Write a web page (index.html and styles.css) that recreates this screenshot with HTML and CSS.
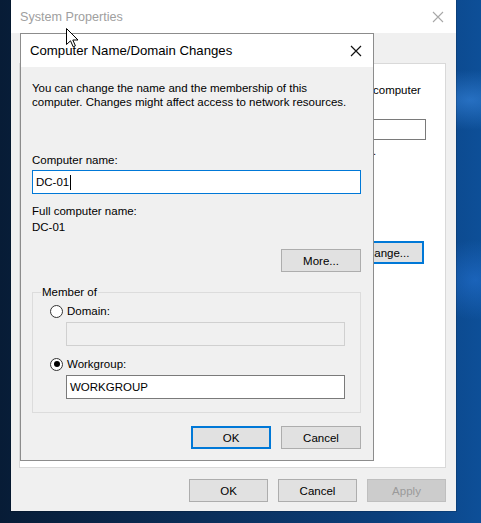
FILE: index.html
```html
<!DOCTYPE html>
<html>
<head>
<meta charset="utf-8">
<link rel="stylesheet" href="styles.css">
</head>
<body>
<div class="desktop">
  <div class="sysprops">
    <div class="titlebar inactive">
      <span class="title">System Properties</span>
      <span class="close"><svg width="12" height="12" viewBox="0 0 12 12"><path d="M1 1L11 11M11 1L1 11" stroke="#a8a8a8" stroke-width="1.1"/></svg></span>
    </div>
    <div class="sp-body">
      <div class="panel">
        <div class="bg-text">computer</div>
        <div class="bg-input"></div>
        <div class="bg-dot">.</div>
        <div class="bg-btn-row"><button class="btn focus bg-change">Change...</button></div>
      </div>
      <div class="sp-buttons">
        <button class="btn">OK</button>
        <button class="btn">Cancel</button>
        <button class="btn disabled">Apply</button>
      </div>
    </div>
  </div>

  <div class="dialog">
    <div class="titlebar">
      <span class="title dlg-title">Computer Name/Domain Changes</span>
      <span class="close"><svg width="12" height="12" viewBox="0 0 12 12"><path d="M1 1L11 11M11 1L1 11" stroke="#111" stroke-width="1.2"/></svg></span>
    </div>
    <div class="dlg-body">
      <p class="intro">You can change the name and the membership of this computer. Changes might affect access to network resources.</p>
      <div class="label lbl-name">Computer name:</div>
      <div class="input active">DC-01<span class="caret"></span></div>
      <div class="label lbl-full">Full computer name:</div>
      <div class="label">DC-01</div>
      <div class="more-row"><button class="btn">More...</button></div>
      <fieldset class="group">
        <legend>Member of</legend>
        <div class="radio-row"><span class="radio"></span><span>Domain:</span></div>
        <div class="input disabled-input sub"></div>
        <div class="radio-row wg"><span class="radio checked"></span><span>Workgroup:</span></div>
        <div class="input sub">WORKGROUP</div>
      </fieldset>
      <div class="dlg-buttons">
        <button class="btn focus">OK</button>
        <button class="btn">Cancel</button>
      </div>
    </div>
  </div>

  <svg class="cursor" width="13" height="20" viewBox="0 0 13 20"><path d="M0.5 0.5 L0.5 16.5 L4.5 12.8 L7.2 18.8 L9.4 17.8 L6.8 12 L12 12 Z" fill="#fff" stroke="#000" stroke-width="1"/></svg>
</div>
</body>
</html>
```

FILE: styles.css
```css
html, body {
  margin: 0;
  padding: 0;
}
body {
  width: 481px;
  height: 523px;
  overflow: hidden;
  font-family: "Liberation Sans", Arial, sans-serif;
  font-size: 11.5px;
  color: #000;
}
.desktop {
  position: relative;
  width: 481px;
  height: 523px;
  background:
    radial-gradient(ellipse 60px 30px at 470px 100px, rgba(60,140,230,0.55), rgba(60,140,230,0) 100%),
    radial-gradient(ellipse 50px 40px at 475px 280px, rgba(40,120,220,0.5), rgba(40,120,220,0) 100%),
    linear-gradient(90deg, #071c36 0%, #0a2d57 40%, #0b3f7c 80%, #0d4f98 100%);
}
.sysprops {
  position: absolute;
  left: 11px;
  top: 0;
  width: 445px;
  height: 511px;
  background: #f0f0f0;
  display: flex;
  flex-direction: column;
  box-shadow: 0 0 0 1px rgba(0,0,0,0.15);
}
.titlebar {
  height: 33px;
  background: #fff;
  display: flex;
  align-items: center;
  justify-content: space-between;
  flex: none;
}
.sysprops .titlebar {
  padding: 0 12px 0 9px;
}
.title {
  font-family: "Liberation Sans", Arial, sans-serif;
  font-size: 12.6px;
}
.inactive .title {
  color: #a0a0a0;
}
.close {
  display: flex;
  width: 12px;
  height: 12px;
}
.sp-body {
  flex: 1;
  display: flex;
  flex-direction: column;
  padding: 30px 10px 0 8px;
}
.panel {
  height: 405px;
  background: #fff;
  border: 1px solid #d9d9d9;
  padding: 19px 0 0 353px;
  box-sizing: border-box;
  overflow: hidden;
}
.bg-text {
  line-height: 14px;
}
.bg-input {
  margin-top: 22px;
  width: 52px;
  height: 19px;
  border: 1px solid #7a7a7a;
  border-left: none;
}
.bg-dot {
  margin-top: 4px;
  line-height: 14px;
  height: 14px;
}
.bg-btn-row {
  margin-top: 83px;
  margin-left: -28px;
}
.bg-change {
  width: 79px;
}
.sp-buttons {
  display: flex;
  gap: 10px;
  padding: 11px 0 0 170px;
}
.sp-buttons .btn {
  width: 80px;
}
.btn {
  height: 23px;
  box-sizing: border-box;
  background: #e1e1e1;
  border: 1px solid #adadad;
  font-family: "Liberation Sans", Arial, sans-serif;
  font-size: 11.5px;
  color: #000;
  padding: 0;
  margin: 0;
}
.btn.focus {
  border: 2px solid #0078d7;
}
.btn.disabled {
  background: #cccccc;
  border-color: #bfbfbf;
  color: #9a9a9a;
}
.dialog {
  position: absolute;
  left: 20px;
  top: 33px;
  width: 354px;
  height: 428px;
  box-sizing: border-box;
  border: 1px solid #8c8c8c;
  background: #f0f0f0;
  display: flex;
  flex-direction: column;
}
.dialog .titlebar {
  padding: 0 11px 0 9px;
}
.dlg-title {
  font-size: 13.2px;
  color: #000;
}
.dlg-body {
  padding: 14px 12px 0 11px;
  display: flex;
  flex-direction: column;
}
.intro {
  margin: 0;
  line-height: 14px;
  width: 320px;
}
.label {
  line-height: 16px;
}
.lbl-name {
  margin-top: 43px;
}
.input {
  height: 24px;
  box-sizing: border-box;
  border: 1px solid #7a7a7a;
  background: #fff;
  padding: 0 3px;
  line-height: 22px;
  display: flex;
  align-items: center;
}
.input.active {
  margin-top: 2px;
  border-color: #0078d7;
}
.caret {
  display: inline-block;
  width: 1px;
  height: 15px;
  background: #000;
  margin-left: 1px;
}
.lbl-full {
  margin-top: 9px;
}
.more-row {
  display: flex;
  justify-content: flex-end;
  margin-top: 14px;
}
.more-row .btn {
  width: 80px;
}
.group {
  margin: 13px 0 0 0;
  padding: 4px 15px 13px 15px;
  border: 1px solid #dcdcdc;
  min-width: 0;
}
.group legend {
  padding: 0 1px;
  margin-left: -7px;
  line-height: 14px;
}
.radio-row {
  display: flex;
  align-items: center;
  gap: 4px;
  height: 16px;
  margin-left: 2px;
}
.radio-row.wg {
  margin-top: 10px;
}
.radio {
  width: 11px;
  height: 11px;
  border: 1px solid #333;
  border-radius: 50%;
  background: #fff;
  position: relative;
  flex: none;
}
.radio.checked::after {
  content: "";
  position: absolute;
  left: 2.5px;
  top: 2.5px;
  width: 6px;
  height: 6px;
  border-radius: 50%;
  background: #000;
}
.input.sub {
  margin: 3px 0 0 18px;
}
.disabled-input {
  background: #f0f0f0;
  border-color: #d0d0d0;
}
.dlg-buttons {
  display: flex;
  justify-content: flex-end;
  gap: 10px;
  margin-top: 13px;
}
.dlg-buttons .btn {
  width: 80px;
}
.cursor {
  position: absolute;
  left: 66px;
  top: 28px;
}
```
